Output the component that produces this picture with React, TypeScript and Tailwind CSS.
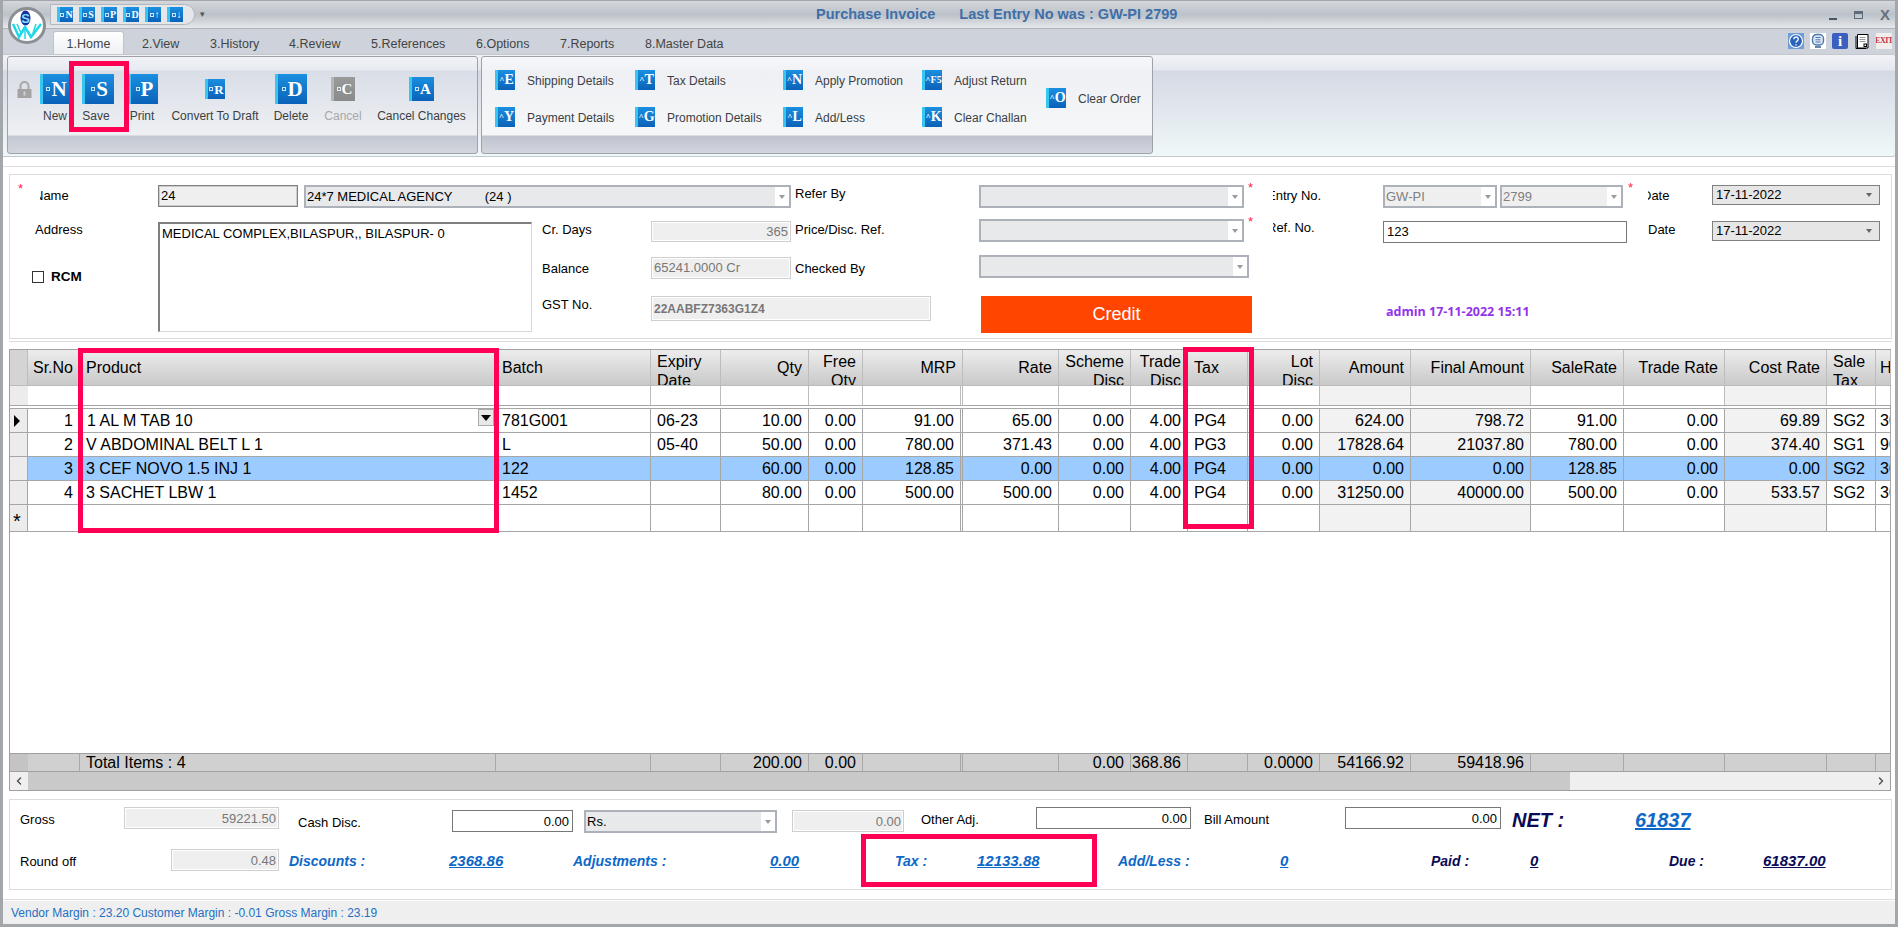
import { ChevronLeft, ChevronRight } from 'lucide-react';
import type { ReactNode } from 'react';

const gridCols =
  'grid grid-cols-[18px_52px_416px_155px_70px_88px_54px_100px_96px_72px_57px_60px_72px_91px_120px_93px_101px_102px_49px_15px]';

type Col = { name: string; right?: boolean; wrap?: boolean; shade?: boolean; dbl?: boolean; tight?: boolean };

const cols: Col[] = [
  { name: 'Sr.No', right: true },
  { name: 'Product' },
  { name: 'Batch' },
  { name: 'Expiry Date', wrap: true },
  { name: 'Qty', right: true },
  { name: 'Free Qty', right: true, wrap: true },
  { name: 'MRP', right: true, dbl: true },
  { name: 'Rate', right: true },
  { name: 'Scheme Disc', right: true, wrap: true },
  { name: 'Trade Disc', right: true, wrap: true },
  { name: 'Tax' },
  { name: 'Lot Disc', right: true, wrap: true },
  { name: 'Amount', right: true, shade: true },
  { name: 'Final Amount', right: true, shade: true },
  { name: 'SaleRate', right: true },
  { name: 'Trade Rate', right: true },
  { name: 'Cost Rate', right: true, shade: true },
  { name: 'Sale Tax', wrap: true },
  { name: 'HSN', tight: true },
];

const rows = [
  ['1', '1 AL M TAB 10', '781G001', '06-23', '10.00', '0.00', '91.00', '65.00', '0.00', '4.00', 'PG4', '0.00', '624.00', '798.72', '91.00', '0.00', '69.89', 'SG2', '3004'],
  ['2', 'V ABDOMINAL BELT L 1', 'L', '05-40', '50.00', '0.00', '780.00', '371.43', '0.00', '4.00', 'PG3', '0.00', '17828.64', '21037.80', '780.00', '0.00', '374.40', 'SG1', '9021'],
  ['3', '3 CEF NOVO 1.5 INJ 1', '122', '', '60.00', '0.00', '128.85', '0.00', '0.00', '4.00', 'PG4', '0.00', '0.00', '0.00', '128.85', '0.00', '0.00', 'SG2', '3004'],
  ['4', '3 SACHET LBW 1', '1452', '', '80.00', '0.00', '500.00', '500.00', '0.00', '4.00', 'PG4', '0.00', '31250.00', '40000.00', '500.00', '0.00', '533.57', 'SG2', '3004'],
  ['', '', '', '', '', '', '', '', '', '', '', '', '', '', '', '', '', '', ''],
];

const totals = ['', 'Total Items : 4', '', '', '200.00', '0.00', '', '', '0.00', '368.86', '', '0.0000', '54166.92', '59418.96', '', '', '', '', ''];

const tabs = [
  { label: '2.View', cls: 'w-[68px]' },
  { label: '3.History', cls: 'w-[79px]' },
  { label: '4.Review', cls: 'w-[82px]' },
  { label: '5.References', cls: 'w-[105px]' },
  { label: '6.Options', cls: 'w-[84px]' },
  { label: '7.Reports', cls: 'w-[85px]' },
  { label: '8.Master Data', cls: 'w-[100px]' },
];

function BookIcon({ letter, mark = 'box', className, text, gray }: { letter: string; mark?: 'box' | 'caret' | 'none'; className: string; text: string; gray?: boolean }) {
  return (
    <div
      className={`flex items-center justify-center overflow-hidden font-['Liberation_Serif',serif] font-bold text-white leading-none ${
        gray
          ? 'border-l-[3px] border-[#b5b5b5] bg-gradient-to-b from-[#9a9a9a] to-[#8a8a8a]'
          : 'border-l-[3px] border-[#36c6f0] bg-gradient-to-b from-[#1b8fe0] to-[#0b62b8]'
      } ${className}`}
    >
      {mark === 'box' && <span className="mr-[1px] h-[4px] w-[4px] shrink-0 border border-white/80" />}
      {mark === 'caret' && <span className="text-[9px]">^</span>}
      <span className={text}>{letter}</span>
    </div>
  );
}

function Logo() {
  return (
    <svg viewBox="0 0 38 37" className="absolute left-[8px] top-[7px] h-[37px] w-[38px]">
      <ellipse cx="19" cy="18.5" rx="17.5" ry="17" fill="#fff" stroke="#8b8f94" strokeWidth="3" />
      <ellipse cx="17.5" cy="11" rx="5" ry="7.5" fill="#1a2fa0" />
      <text x="17.5" y="16" textAnchor="middle" fontSize="13" fontWeight="700" fill="#7fe3ff" fontFamily="Liberation Sans">S</text>
      <path d="M5 17 L11 30 L17 20 L23 30 L33 17" fill="none" stroke="#1fd8e8" strokeWidth="2.5" />
      <path d="M9 17 L13 26 M28 17 L25 26 M17 20 L17 32" fill="none" stroke="#1fd8e8" strokeWidth="1.5" />
    </svg>
  );
}

function Tri({ className = 'border-t-[#9a9a9a]' }: { className?: string }) {
  return <span className={`h-0 w-0 border-x-[3px] border-t-[4px] border-x-transparent ${className}`} />;
}

function Combo({ value, className, muted }: { value?: string; className: string; muted?: boolean }) {
  return (
    <div className={`flex items-stretch border-2 border-[#adb2ba] ${muted ? 'bg-[#efefef] text-[#808080]' : 'bg-[#e8e9eb] text-black'} ${className}`}>
      <span className="flex-1 overflow-hidden whitespace-pre pl-[1px] leading-[19px]">{value}</span>
      <span className="flex w-[14px] items-center justify-center bg-white">
        <Tri />
      </span>
    </div>
  );
}

function DateBox({ className }: { className: string }) {
  return (
    <div className={`flex items-center justify-between border border-[#808080] bg-[#e6e6e6] pl-[3px] pr-[7px] ${className}`}>
      <span>17-11-2022</span>
      <Tri className="border-t-[#666666]" />
    </div>
  );
}

function Disabled({ children, className }: { children?: ReactNode; className: string }) {
  return (
    <div className={`flex items-center overflow-hidden whitespace-nowrap border border-[#cfcfcf] bg-[#efefef] px-[2px] text-[#777777] ring-1 ring-inset ring-white ${className}`}>
      {children}
    </div>
  );
}

function Star() {
  return <span className="-mt-[4px] block text-[13px] leading-none text-[#ff2050]">*</span>;
}

// first letter of these labels is cut off by the neighbour control in the real app
function Clipped({ children, className }: { children: ReactNode; className: string }) {
  return (
    <div className={`h-[18px] overflow-hidden leading-[18px] ${className}`}>
      <div className="-ml-[6px] whitespace-nowrap">{children}</div>
    </div>
  );
}

function Caption({ children, className }: { children: ReactNode; className: string }) {
  return <div className={`pt-[2px] text-[14px] font-bold italic ${className}`}>{children}</div>;
}

function Link({ children, className }: { children: ReactNode; className: string }) {
  return <div className={`pt-[3px] text-[15px] font-bold italic underline ${className}`}>{children}</div>;
}

function SmallAction({ letter, label, text = 'text-[14px]' }: { letter: string; label: string; text?: string }) {
  return (
    <div className="flex items-center gap-[12px] text-[12px] text-[#3b3f45]">
      <BookIcon letter={letter} mark="caret" className="h-[20px] w-[20px] shrink-0" text={text} />
      <span className="whitespace-nowrap pt-[2px]">{label}</span>
    </div>
  );
}

function RibbonButton({ letter, label, colCls, iconCls, text, gray, labelCls = '' }: { letter: string; label: string; colCls: string; iconCls: string; text: string; gray?: boolean; labelCls?: string }) {
  return (
    <div className={`flex shrink-0 flex-col items-center ${colCls}`}>
      <div className="flex h-[30px] items-center">
        <BookIcon letter={letter} className={iconCls} text={text} gray={gray} />
      </div>
      <div className={`mt-[5px] h-[14px] whitespace-nowrap text-[12px] leading-[14px] ${gray ? 'text-[#a8a8a8]' : 'text-[#3b3f45]'} ${labelCls}`}>{label}</div>
    </div>
  );
}

function LockIcon() {
  return (
    <svg viewBox="0 0 17 17" className="ml-[8px] mt-[7px] h-[17px] w-[17px] shrink-0">
      <path d="M4.5 8V5a4 4 0 0 1 8 0v3" fill="none" stroke="#a8a8a8" strokeWidth="2" />
      <rect x="1.5" y="8" width="14" height="9" fill="#a3a3a3" />
      <rect x="7.5" y="10.5" width="2" height="4" fill="#cfcfcf" />
    </svg>
  );
}

function WindowIcons() {
  return (
    <div className="flex items-center">
      <svg viewBox="0 0 16 16" className="h-[16px] w-[16px]">
        <rect width="16" height="16" fill="#6f9ed6" />
        <circle cx="8" cy="8" r="6.5" fill="#2a62b8" stroke="#fff" strokeWidth="1.2" />
        <path d="M5.8 6.2a2.2 2.2 0 1 1 3.4 1.8c-.8.5-1.2 1-1.2 1.8M8 11.3v1.2" fill="none" stroke="#fff" strokeWidth="1.4" />
      </svg>
      <svg viewBox="0 0 16 16" className="ml-[6px] h-[16px] w-[16px]">
        <rect width="16" height="16" fill="#fff" />
        <rect x="2.5" y="1.5" width="11" height="10.5" rx="4" fill="#dbe6f2" stroke="#4d78ad" strokeWidth="1.4" />
        <path d="M5.5 4.5h5M5.5 6.8h5M5.5 9h5" stroke="#4d78ad" />
        <path d="M5 14h6" stroke="#3d5f8a" strokeWidth="1.5" />
      </svg>
      <div className="ml-[6px] flex h-[16px] w-[16px] items-center justify-center rounded-[2px] bg-[#3c5fc0] font-['Liberation_Serif',serif] text-[15px] font-bold leading-none text-white">i</div>
      <svg viewBox="0 0 14 16" className="ml-[7px] h-[16px] w-[14px]">
        <path d="M2.5 1.5H13V15H2.5z" fill="#fff" stroke="#000" />
        <path d="M1 3v12.5h10" fill="none" stroke="#000" />
        <path d="M4.5 4.5h6M4.5 6.5h6M4.5 8.5h6" stroke="#999" />
        <rect x="9" y="11" width="2.5" height="2.5" fill="none" stroke="#000" />
      </svg>
      <div className="ml-[7px] flex h-[16px] w-[16px] items-center justify-center overflow-hidden bg-[#f3eeee] font-['Liberation_Serif',serif] text-[8px] font-bold leading-none tracking-tighter text-[#c2343f]">EXIT</div>
    </div>
  );
}

function GridCell({ col, children, className = '' }: { col: Col; children?: ReactNode; className?: string }) {
  return (
    <div
      className={`flex items-center overflow-hidden whitespace-nowrap border-b border-[#a6a6a6] ${col.tight ? 'pl-[4px]' : 'px-[6px]'} ${col.dbl ? 'border-r-[3px] border-double' : 'border-r'} ${
        col.right ? 'justify-end' : 'justify-start'
      } ${className}`}
    >
      {children}
    </div>
  );
}

export default function App() {
  return (
    <div className="relative flex h-[927px] w-[1898px] flex-col overflow-hidden border-x-[3px] border-b-[3px] border-t border-[#a3a7ab] bg-white font-['Liberation_Sans',Arial,sans-serif] text-[13px] text-black">
      {/* title bar */}
      <div className="relative flex h-[27px] shrink-0 items-center bg-gradient-to-b from-[#d4d7db] via-[#bcc2c9] to-[#e6e8ec] -mx-[3px]">
        <div className="ml-[50px] flex h-[21px] w-[145px] items-center gap-[6px] rounded-r-full border border-[#b4b8be] bg-[#e4e6ea] pl-[6px]">
          {['N', 'S', 'P', 'D', '↑', '↓'].map((l) => (
            <BookIcon key={l} letter={l} className="h-[15px] w-[16px]" text="text-[10px]" />
          ))}
        </div>
        <div className="ml-[5px] text-[9px] leading-none text-[#555555]">▾</div>
        <div className="ml-[611px] whitespace-nowrap pt-[1px] text-[14.5px] font-bold text-[#3f6fa8]">Purchase Invoice</div>
        <div className="ml-[24px] whitespace-nowrap pt-[1px] text-[14.5px] font-bold text-[#3f6fa8]">Last Entry No was : GW-PI 2799</div>
        <div className="ml-auto mr-[8px] flex items-center gap-[17px]">
          <div className="mt-[8px] h-[2px] w-[8px] bg-[#4a5563]" />
          <div className="h-[8px] w-[9px] border border-t-[3px] border-[#5f6b78]" />
          <div className="text-[15px] font-bold leading-none text-[#66707c]">X</div>
        </div>
      </div>

      {/* tabs */}
      <div className="flex h-[26px] shrink-0 items-end border-t border-[#b0b4ba] bg-[#ced2da] -mx-[3px] pr-[6px]">
        <div className="ml-[53px] flex h-[23px] w-[71px] items-center justify-center rounded-t-[3px] border border-b-0 border-[#c0c4ca] bg-gradient-to-b from-white to-[#eef0f3] pt-[3px] text-[12.5px] text-[#444444]">1.Home</div>
        {tabs.map((t) => (
          <div key={t.label} className={`flex h-[23px] items-center pl-[18px] pt-[3px] text-[12.5px] text-[#444444] ${t.cls}`}>{t.label}</div>
        ))}
        <div className="ml-auto mb-[5px]">
          <WindowIcons />
        </div>
      </div>

      {/* ribbon */}
      <div className="flex h-[103px] shrink-0 gap-[3px] rounded-[3px] border border-[#c4c7cc] bg-[linear-gradient(#f2f3f7_0,#e6e8f0_15px,#d5d9e4_16px,#eff8f8_100%)] pl-[6px] pt-[1px] -ml-[3px] -mr-[1px]">
        <div className="flex h-[98px] w-[471px] shrink-0 rounded-[3px] border border-[#9ea2a8] bg-[linear-gradient(#f0f2f7_0,#e8ebf1_13px,#d9dde6_14px,#eef0f3_78px,#c3c7d1_79px,#d3d6de_100%)] pt-[17px]">
          <LockIcon />
          <RibbonButton letter="N" label="New" colCls="ml-[7px] w-[30px]" iconCls="h-[30px] w-[30px]" text="text-[21px]" />
          <RibbonButton letter="S" label="Save" colCls="ml-[11px] w-[34px]" iconCls="h-[30px] w-[32px]" text="text-[21px]" labelCls="-translate-x-[2px]" />
          <RibbonButton letter="P" label="Print" colCls="ml-[13px] w-[30px]" iconCls="h-[30px] w-[30px]" text="text-[21px]" labelCls="-translate-x-[1px]" />
          <RibbonButton letter="R" label="Convert To Draft" colCls="ml-[13px] w-[88px]" iconCls="h-[20px] w-[20px]" text="text-[13px]" />
          <RibbonButton letter="D" label="Delete" colCls="ml-[14px] w-[36px]" iconCls="h-[30px] w-[32px]" text="text-[21px]" />
          <RibbonButton letter="C" label="Cancel" colCls="ml-[15px] w-[38px]" iconCls="h-[24px] w-[24px]" text="text-[15px]" gray />
          <RibbonButton letter="A" label="Cancel Changes" colCls="ml-[14px] w-[91px]" iconCls="h-[24px] w-[25px]" text="text-[15px]" />
        </div>
        <div className="flex h-[98px] w-[672px] shrink-0 rounded-[3px] border border-[#9ea2a8] bg-[linear-gradient(#f6f7fa_0,#f0f2f6_13px,#eef0f4_14px,#f6f7f8_78px,#bfc3ce_79px,#d3d6de_100%)] pl-[13px] pt-[13px]">
          <div className="flex w-[140px] flex-col gap-[17px]">
            <SmallAction letter="E" label="Shipping Details" />
            <SmallAction letter="Y" label="Payment Details" />
          </div>
          <div className="flex w-[148px] flex-col gap-[17px]">
            <SmallAction letter="T" label="Tax Details" />
            <SmallAction letter="G" label="Promotion Details" />
          </div>
          <div className="flex w-[139px] flex-col gap-[17px]">
            <SmallAction letter="N" label="Apply Promotion" />
            <SmallAction letter="L" label="Add/Less" />
          </div>
          <div className="flex w-[124px] flex-col gap-[17px]">
            <SmallAction letter="F5" label="Adjust Return" text="text-[10px]" />
            <SmallAction letter="K" label="Clear Challan" />
          </div>
          <div className="pt-[18px]">
            <SmallAction letter="O" label="Clear Order" />
          </div>
        </div>
      </div>

      {/* form panel */}
      <div className="mt-[9px] h-[1px] shrink-0 bg-[#dddddd]" />
      <div className="ml-[6px] mr-[3px] mt-[7px] flex h-[165px] shrink-0 border border-[#dcdcdc]">
        <div className="w-[781px] shrink-0">
          <div className="mt-[10px] flex h-[22px]">
            <div className="ml-[8px] mt-[1px] w-[22px]"><Star /></div>
            <Clipped className="mt-[2px] w-[118px]">Name</Clipped>
            <div className="flex w-[140px] items-center border border-[#808080] bg-[#efefef] pl-[2px] ring-1 ring-inset ring-[#cccccc]">24</div>
            <Combo value="24*7 MEDICAL AGENCY         (24 )" className="ml-[6px] h-[23px] w-[487px]" />
          </div>
          <div className="mt-[14px] flex">
            <div className="ml-[25px] w-[123px] leading-[18px]">
              <div className="h-[16px]">Address</div>
              <div className="mt-[34px] flex h-[12px] items-center">
                <span className="-ml-[3px] h-[12px] w-[12px] border border-[#333333] bg-white" />
                <span className="ml-[7px] text-[13.5px] font-bold">RCM</span>
              </div>
            </div>
            <div className="mt-[1px] h-[110px] w-[374px] border border-[#d9d9d9] border-l-2 border-t-2 border-l-[#7f7f7f] border-t-[#7f7f7f] pl-[2px] pt-[1px] leading-[17px]">
              MEDICAL COMPLEX,BILASPUR,, BILASPUR- 0
            </div>
            <div className="ml-[10px] w-[109px] leading-[18px]">
              <div className="h-[16px]">Cr. Days</div>
              <div className="mt-[23px] h-[16px]">Balance</div>
              <div className="mt-[20px] h-[16px]">GST No.</div>
            </div>
            <div className="w-[140px]">
              <Disabled className="h-[21px] justify-end">365</Disabled>
              <Disabled className="mt-[15px] h-[22px]">65241.0000 Cr</Disabled>
              <Disabled className="mt-[17px] h-[25px] w-[280px] text-[12px] font-bold text-[#6a6a6a]">22AABFZ7363G1Z4</Disabled>
            </div>
          </div>
        </div>

        <div className="w-[188px] shrink-0 pl-[4px] leading-[18px]">
          <div className="mt-[10px] h-[16px]">Refer By</div>
          <div className="mt-[20px] h-[16px]">Price/Disc. Ref.</div>
          <div className="mt-[23px] h-[16px]">Checked By</div>
        </div>

        <div className="w-[274px] shrink-0">
          <div className="mt-[10px] flex items-start">
            <Combo className="h-[23px] w-[270px]" />
            <span className="ml-[4px]"><Star /></span>
          </div>
          <div className="mt-[11px] flex items-start">
            <Combo className="h-[23px] w-[270px]" />
            <span className="ml-[4px]"><Star /></span>
          </div>
          <Combo className="mt-[13px] h-[23px] w-[270px]" />
          <div className="ml-[2px] mt-[18px] flex h-[37px] w-[271px] items-center justify-center bg-[#ff4500] text-[18px] text-white">Credit</div>
        </div>

        <div className="w-[130px] shrink-0 pl-[20px]">
          <Clipped className="mt-[12px]">Entry No.</Clipped>
          <Clipped className="mt-[14px]">Ref. No.</Clipped>
        </div>

        <div className="w-[265px] shrink-0">
          <div className="mt-[10px] flex items-start">
            <Combo value="GW-PI" muted className="h-[23px] w-[114px]" />
            <Combo value="2799" muted className="ml-[3px] h-[23px] w-[123px]" />
            <span className="ml-[5px]"><Star /></span>
          </div>
          <div className="mt-[13px] flex h-[22px] w-[244px] items-center border border-[#777777] pl-[3px]">123</div>
          <div className="ml-[3px] mt-[61px] h-[16px] whitespace-nowrap font-['Open_Sans',sans-serif] text-[12.5px] font-bold leading-[16px] text-[#9333ea]">admin 17-11-2022 15:11</div>
        </div>

        <div className="w-[64px] shrink-0">
          <Clipped className="mt-[12px]">Date</Clipped>
          <div className="mt-[16px] h-[18px] leading-[18px]">Date</div>
        </div>

        <div className="w-[168px] shrink-0">
          <DateBox className="mt-[10px] h-[20px]" />
          <DateBox className="mt-[16px] h-[20px]" />
        </div>
      </div>

      <div className="ml-[6px] mr-[3px] mt-[2px] h-[1px] shrink-0 bg-[#dddddd]" />

      {/* grid */}
      <div className="ml-[6px] mr-[4px] mt-[7px] flex h-[442px] shrink-0 flex-col border border-[#a0a0a0] text-[16px]">
        <div className={`${gridCols} h-[35px] shrink-0 bg-gradient-to-b from-[#ededed] to-[#c9c9c9] leading-[19px]`}>
          <div className="border-r border-[#bdbdbd] bg-[#d4d4d4]" />
          {cols.map((c) => (
            <div
              key={c.name}
              className={`flex h-[35px] overflow-hidden border-r border-[#bdbdbd] ${c.tight ? 'pl-[4px]' : 'px-[6px]'} ${c.wrap ? 'items-start pt-[2px]' : 'items-center'} ${c.right ? 'justify-end text-right' : ''}`}
            >
              <span className={c.wrap ? 'w-min' : 'whitespace-nowrap'}>{c.name}</span>
            </div>
          ))}
        </div>

        {/* filter row */}
        <div className={`${gridCols} h-[20px] shrink-0 border-t border-[#bbbbbb]`}>
          <div className="bg-[#ececec]" />
          {cols.map((c) => (
            <GridCell key={c.name} col={c} className={`border-b-0 border-[#bdbdbd] ${c.shade ? 'bg-[#f2f2f2]' : 'bg-white'}`} />
          ))}
        </div>
        <div className="h-[4px] shrink-0 border-y border-[#a6a6a6] bg-white" />

        {rows.map((row, i) => (
          <div key={i} className={`${gridCols} h-[24px] shrink-0`}>
            <div className="flex items-center justify-center border-b border-r border-[#a6a6a6] bg-[#ececec] pr-[3px]">
              {i === 0 && (
                <svg viewBox="0 0 6 12" className="h-[12px] w-[6px]">
                  <path d="M0 0l6 6-6 6z" fill="#000" />
                </svg>
              )}
              {i === 4 && <span className="pt-[6px] text-[20px] leading-none">*</span>}
            </div>
            {cols.map((c, j) => (
              <GridCell
                key={c.name}
                col={c}
                className={`${i === 2 ? 'bg-[#9ccbff]' : c.shade ? 'bg-[#f2f2f2]' : 'bg-white'} ${j === 1 ? 'relative' : ''}`}
              >
                {i === 0 && j === 1 ? <span className="ml-[1px]">{row[j]}</span> : row[j]}
                {i === 0 && j === 1 && (
                  <span className="absolute right-[1px] top-[0px] flex h-[17px] w-[16px] items-center justify-center border border-[#aaaaaa] bg-[#e8e8e8]">
                    <svg viewBox="0 0 10 6" className="h-[6px] w-[10px]">
                      <path d="M0 0h10L5 6z" fill="#000" />
                    </svg>
                  </span>
                )}
              </GridCell>
            ))}
          </div>
        ))}

        <div className="flex-1" />

        <div className={`${gridCols} h-[19px] shrink-0 border-y border-[#a0a0a0] bg-[#d0d0d0] leading-none`}>
          <div className="bg-[#c4c4c4]" />
          {cols.map((c, j) => (
            <GridCell key={c.name} col={c} className="border-b-0 border-[#a8a8a8]">
              {totals[j]}
            </GridCell>
          ))}
        </div>

        <div className="flex h-[18px] shrink-0 bg-[#efefef]">
          <div className="flex w-[18px] items-center justify-center">
            <ChevronLeft className="h-[12px] w-[12px] text-[#555555]" strokeWidth={3} />
          </div>
          <div className="w-[1542px] bg-[#c9c9c9]" />
          <div className="ml-auto flex w-[18px] items-center justify-center">
            <ChevronRight className="h-[12px] w-[12px] text-[#555555]" strokeWidth={3} />
          </div>
        </div>
      </div>

      {/* totals panel */}
      <div className="ml-[6px] mr-[3px] mt-[8px] h-[91px] shrink-0 border border-[#dcdcdc] pt-[7px]">
        <div className="flex h-[25px] items-start">
          <div className="ml-[10px] flex h-[22px] w-[104px] items-center pt-[4px]">Gross</div>
          <Disabled className="h-[22px] w-[155px] justify-end pt-[2px]">59221.50</Disabled>
          <div className="ml-[19px] mt-[3px] flex h-[22px] w-[154px] items-center pt-[4px]">Cash Disc.</div>
          <div className="mt-[3px] flex h-[22px] w-[121px] items-center justify-end border border-[#777777] pr-[3px] pt-[2px]">0.00</div>
          <Combo value="Rs." className="ml-[11px] mt-[3px] h-[23px] w-[193px]" />
          <Disabled className="ml-[15px] mt-[3px] h-[22px] w-[112px] justify-end pt-[2px]">0.00</Disabled>
          <div className="ml-[17px] flex h-[22px] w-[115px] items-center pt-[4px]">Other Adj.</div>
          <div className="flex h-[22px] w-[155px] items-center justify-end border border-[#777777] pr-[3px] pt-[1px]">0.00</div>
          <div className="ml-[13px] flex h-[22px] w-[141px] items-center pt-[4px]">Bill Amount</div>
          <div className="flex h-[22px] w-[156px] items-center justify-end border border-[#777777] pr-[3px] pt-[1px]">0.00</div>
          <div className="ml-[11px] flex h-[22px] w-[123px] items-center pt-[3px] text-[20px] font-bold italic text-[#0a0a55]">NET :</div>
          <div className="flex h-[22px] items-center pt-[3px] text-[20px] font-bold italic text-[#0d68c8] underline">61837</div>
        </div>
        <div className="mt-[17px] flex h-[22px] items-center">
          <div className="ml-[10px] w-[151px] pt-[4px]">Round off</div>
          <Disabled className="h-[22px] w-[108px] justify-end pt-[2px]">0.48</Disabled>
          <Caption className="ml-[10px] w-[160px] text-[#0d68c8]">Discounts :</Caption>
          <Link className="w-[124px] text-[#0d68c8]">2368.86</Link>
          <Caption className="w-[197px] text-[#0d68c8]">Adjustments :</Caption>
          <Link className="w-[125px] text-[#0d68c8]">0.00</Link>
          <Caption className="w-[82px] text-[#0d68c8]">Tax :</Caption>
          <Link className="w-[141px] text-[#0d68c8]">12133.88</Link>
          <Caption className="w-[162px] text-[#0d68c8]">Add/Less :</Caption>
          <Link className="w-[151px] text-[#0d68c8]">0</Link>
          <Caption className="w-[99px] text-[#0a0a55]">Paid :</Caption>
          <Link className="w-[139px] text-[#0a0a55]">0</Link>
          <Caption className="w-[94px] text-[#0a0a55]">Due :</Caption>
          <Link className="text-[#0a0a55]">61837.00</Link>
        </div>
      </div>

      {/* status bar */}
      <div className="mt-[9px] h-[1px] shrink-0 bg-[#dddddd]" />
      <div className="mt-[1px] flex flex-1 items-center bg-[#efefef] pl-[8px] text-[12px] text-[#1f6fc4]">
        Vendor Margin : 23.20 Customer Margin : -0.01 Gross Margin : 23.19
      </div>

      {/* red annotation boxes drawn over the screenshot */}
      <div className="absolute left-[66px] top-[60px] h-[71px] w-[60px] border-[5px] border-[#ff0055]" />
      <div className="absolute left-[75px] top-[347px] h-[185px] w-[421px] border-[5px] border-[#ff0055]" />
      <div className="absolute left-[1180px] top-[346px] h-[182px] w-[71px] border-[5px] border-[#ff0055]" />
      <div className="absolute left-[858px] top-[833px] h-[53px] w-[236px] border-[5px] border-[#ff0055]" />

      <div className="absolute -left-[3px] -top-[1px]">
        <Logo />
      </div>
    </div>
  );
}
